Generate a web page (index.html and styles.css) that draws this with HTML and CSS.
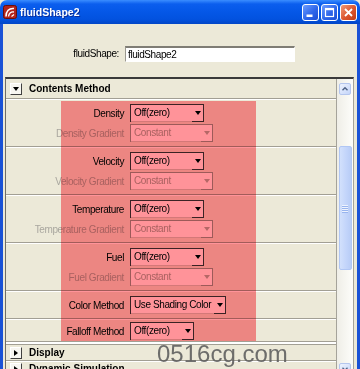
FILE: index.html
```html
<!DOCTYPE html>
<html lang="en">
<head>
    <meta charset="UTF-8">
    <meta name="viewport" content="width=device-width, initial-scale=1.0">
    <title>fluidShape2</title>
    <link rel="stylesheet" href="styles.css">
</head>
<body>
    <div class="window">
        <div class="titlebar">
            <svg class="app-icon" viewBox="0 0 14 14">
                <rect x="0.5" y="0.5" width="13" height="13" rx="2" fill="#b3241c" stroke="#6a0f0a"/>
                <path d="M3 11.5 C3 6 6 3 11 3.5" fill="none" stroke="#fff" stroke-width="1.6"/>
                <path d="M5.5 11.5 C6 8 8 6.5 11 7" fill="none" stroke="#fff" stroke-width="1.4"/>
                <path d="M8.5 11.5 L11 9.5" fill="none" stroke="#fff" stroke-width="1.3"/>
            </svg>
            <span class="title">fluidShape2</span>
            <div class="caption-buttons">
                <span class="cap-btn">
                    <svg viewBox="0 0 15 15"><rect x="3.5" y="9.5" width="6" height="2.5" fill="#fff"/></svg>
                </span>
                <span class="cap-btn">
                    <svg viewBox="0 0 15 15"><rect x="3.5" y="3.5" width="8" height="8" fill="none" stroke="#fff" stroke-width="1.2"/><rect x="3" y="3" width="9" height="2.2" fill="#fff"/></svg>
                </span>
                <span class="cap-btn close">
                    <svg viewBox="0 0 15 15"><path d="M4 4 L11 11 M11 4 L4 11" stroke="#fff" stroke-width="1.8"/></svg>
                </span>
            </div>
        </div>

        <div class="client">
            <div class="name-row">
                <span class="name-label">fluidShape:</span>
                <div class="text-field">fluidShape2</div>
            </div>

            <div class="panel">
                <div class="scroll-area">
                    <div class="frame-header">
                        <span class="toggle"><i class="tri-down"></i></span>
                        <span>Contents Method</span>
                    </div>

                    <div class="section">
                        <div class="row">
                            <span class="label">Density</span>
                            <div class="dropdown w-off"><span class="value">Off(zero)</span><span class="btn"></span></div>
                        </div>
                        <div class="row disabled">
                            <span class="label">Density Gradient</span>
                            <div class="dropdown w-const"><span class="value">Constant</span><span class="btn"></span></div>
                        </div>
                    </div>

                    <div class="section">
                        <div class="row">
                            <span class="label">Velocity</span>
                            <div class="dropdown w-off"><span class="value">Off(zero)</span><span class="btn"></span></div>
                        </div>
                        <div class="row disabled">
                            <span class="label">Velocity Gradient</span>
                            <div class="dropdown w-const"><span class="value">Constant</span><span class="btn"></span></div>
                        </div>
                    </div>

                    <div class="section">
                        <div class="row">
                            <span class="label">Temperature</span>
                            <div class="dropdown w-off"><span class="value">Off(zero)</span><span class="btn"></span></div>
                        </div>
                        <div class="row disabled">
                            <span class="label">Temperature Gradient</span>
                            <div class="dropdown w-const"><span class="value">Constant</span><span class="btn"></span></div>
                        </div>
                    </div>

                    <div class="section">
                        <div class="row">
                            <span class="label">Fuel</span>
                            <div class="dropdown w-off"><span class="value">Off(zero)</span><span class="btn"></span></div>
                        </div>
                        <div class="row disabled">
                            <span class="label">Fuel Gradient</span>
                            <div class="dropdown w-const"><span class="value">Constant</span><span class="btn"></span></div>
                        </div>
                    </div>

                    <div class="section">
                        <div class="row">
                            <span class="label">Color Method</span>
                            <div class="dropdown w-color"><span class="value">Use Shading Color</span><span class="btn"></span></div>
                        </div>
                    </div>

                    <div class="section last">
                        <div class="row">
                            <span class="label">Falloff Method</span>
                            <div class="dropdown w-falloff"><span class="value">Off(zero)</span><span class="btn"></span></div>
                        </div>
                    </div>

                    <div class="frame-end"></div>

                    <div class="frame-header small">
                        <span class="toggle"><i class="tri-right"></i></span>
                        <span>Display</span>
                    </div>
                    <div class="frame-header small">
                        <span class="toggle"><i class="tri-right"></i></span>
                        <span>Dynamic Simulation</span>
                    </div>
                </div>

                <div class="scrollbar">
                    <span class="sb-btn up">
                        <svg viewBox="0 0 12 12"><path d="M3 7.5 L6 4.5 L9 7.5" fill="none" stroke="#4d6185" stroke-width="1.6"/></svg>
                    </span>
                    <span class="sb-thumb"><i></i><i></i><i></i><i></i></span>
                    <span class="sb-btn down">
                        <svg viewBox="0 0 12 12"><path d="M3 4.5 L6 7.5 L9 4.5" fill="none" stroke="#4d6185" stroke-width="1.6"/></svg>
                    </span>
                </div>
            </div>
        </div>

        <div class="highlight"></div>
        <div class="watermark">0516cg.com</div>
    </div>
</body>
</html>
```

FILE: styles.css
```css
*{
    margin: 0;
    padding: 0;
    box-sizing: border-box;
}
body{
    width: 360px;
    height: 369px;
    overflow: hidden;
    background: #ece9d8;
    font-family: "Liberation Sans", Arial, sans-serif;
    font-size: 10px;
    letter-spacing: -0.4px;
    color: #000;
}
.window{
    position: relative;
    width: 360px;
    height: 369px;
    display: flex;
    flex-direction: column;
    background: #ece9d8;
    overflow: hidden;
}

/* title bar */
.titlebar{
    height: 24px;
    flex: none;
    display: flex;
    align-items: center;
    padding: 0 3px 0 3px;
    border-radius: 7px 7px 0 0;
    background: linear-gradient(#3a8dff, #0b5eee 4px, #0558e8 45%, #0252df 80%, #0246c6);
}
.app-icon{
    width: 14px;
    height: 14px;
    margin-right: 3px;
}
.title{
    flex: 1;
    font-weight: bold;
    font-size: 10.5px;
    letter-spacing: 0;
    color: #fff;
    text-shadow: 1px 1px 0 #0b2d99;
}
.caption-buttons{
    display: flex;
    gap: 2px;
}
.cap-btn{
    width: 17px;
    height: 17px;
    border: 1px solid #fff;
    border-radius: 3px;
    background: linear-gradient(135deg, #6d9dff, #2e66ea 55%, #1c4fd5);
    display: flex;
    align-items: center;
    justify-content: center;
}
.cap-btn svg{
    width: 15px;
    height: 15px;
}
.cap-btn.close{
    background: linear-gradient(135deg, #f09a78, #dc552e 55%, #c23c17);
}

/* window body */
.client{
    flex: 1;
    min-height: 0;
    display: flex;
    flex-direction: column;
    border-left: 3px solid #1a52d6;
    border-right: 3px solid #1a52d6;
}
.name-row{
    height: 53px;
    flex: none;
    display: flex;
    align-items: flex-start;
    gap: 6px;
    padding-top: 22px;
}
.name-label{
    width: 116px;
    text-align: right;
    line-height: 16px;
}
.text-field{
    width: 170px;
    height: 16px;
    background: #fff;
    border-top: 2px solid #7f7d75;
    border-left: 1px solid #9a988f;
    border-right: 1px solid #fff;
    border-bottom: 1px solid #fff;
    padding-left: 2px;
    line-height: 13px;
}

.panel{
    flex: 1;
    min-height: 0;
    display: flex;
    margin: 0 3px 0 2px;
    border-top: 2px solid #3a3a3a;
    border-left: 1px solid #6f6e68;
    border-right: 1px solid #a5a39a;
    overflow: hidden;
}
.scroll-area{
    width: 330px;
    flex: none;
}

/* collapsible frames */
.frame-header{
    height: 20px;
    display: flex;
    align-items: center;
    gap: 7px;
    padding-left: 4px;
    font-weight: bold;
    font-size: 10px;
    letter-spacing: 0;
    border-bottom: 1px solid #a29f94;
    box-shadow: 0 1px 0 #fff;
}
.frame-header.small{
    height: 16px;
}
.toggle{
    width: 12px;
    height: 12px;
    background: #f7f6f1;
    border: 1px solid;
    border-color: #fff #404040 #404040 #fff;
    display: flex;
    align-items: center;
    justify-content: center;
}
.tri-down{
    border-left: 3px solid transparent;
    border-right: 3px solid transparent;
    border-top: 4px solid #000;
}
.tri-right{
    border-top: 3px solid transparent;
    border-bottom: 3px solid transparent;
    border-left: 4px solid #000;
}
.section{
    display: flex;
    flex-direction: column;
    padding: 4px 0 3px;
    border-bottom: 1px solid #a29f94;
    box-shadow: 0 1px 0 #fff;
}
.section.last{
    padding: 2px 0 0;
    border-bottom: none;
    box-shadow: none;
}
.frame-end{
    height: 4px;
    border-top: 1px solid #a29f94;
    border-bottom: 1px solid #a29f94;
    background: #fff;
}

/* attribute rows */
.row{
    height: 20px;
    display: flex;
    align-items: center;
    gap: 6px;
}
.label{
    width: 118px;
    text-align: right;
    white-space: nowrap;
}
.row.disabled .label{
    color: #a9a79f;
}
.dropdown{
    height: 18px;
    display: flex;
    background: #fff;
    border-top: 1px solid #3b3b3b;
    border-left: 1px solid #3b3b3b;
}
.dropdown .value{
    flex: 1;
    padding-left: 3px;
    line-height: 16px;
    white-space: nowrap;
    overflow: hidden;
    border-bottom: 1px solid #d4d0c8;
}
.dropdown .btn{
    width: 12px;
    flex: none;
    display: flex;
    align-items: center;
    justify-content: center;
    border-right: 1px solid #3b3b3b;
    border-bottom: 1px solid #3b3b3b;
}
.dropdown .btn::after{
    content: "";
    border-left: 3px solid transparent;
    border-right: 3px solid transparent;
    border-top: 4px solid #000;
}
.row.disabled .dropdown{
    border-color: #9d9b94;
}
.row.disabled .value{
    color: #aaa8a0;
}
.row.disabled .btn{
    border-color: #9d9b94;
}
.row.disabled .btn::after{
    border-top-color: #b5b3aa;
}
.w-off{ width: 74px; }
.w-const{ width: 83px; }
.w-color{ width: 96px; }
.w-falloff{ width: 64px; }

/* scrollbar */
.scrollbar{
    width: 17px;
    flex: none;
    display: flex;
    flex-direction: column;
    align-items: center;
    border-left: 1px solid #a5a39a;
    background: linear-gradient(to right, #efeee7, #fdfdfa);
}
.sb-btn{
    width: 12px;
    height: 12px;
    flex: none;
    border: 1px solid #b4c6ee;
    border-radius: 2px;
    background: linear-gradient(135deg, #eef3fe, #c4d5f9);
}
.sb-btn svg{
    display: block;
    width: 10px;
    height: 10px;
}
.sb-btn.up{
    margin-top: 4px;
}
.sb-btn.down{
    margin-top: 93px;
}
.sb-thumb{
    width: 13px;
    height: 124px;
    flex: none;
    margin-top: 51px;
    border: 1px solid #b0c6f4;
    border-radius: 2px;
    background: linear-gradient(to right, #d2e0fc, #c2d4fa 60%, #b8ccf6);
    display: flex;
    flex-direction: column;
    align-items: center;
    justify-content: center;
    gap: 1px;
}
.sb-thumb i{
    width: 6px;
    height: 1px;
    background: #eef3fe;
    box-shadow: 0 1px 0 #98b4ee;
}

/* overlays */
.highlight{
    position: absolute;
    left: 61px;
    top: 101px;
    width: 195px;
    height: 240px;
    background: #ff9399;
    mix-blend-mode: multiply;
}
.watermark{
    position: absolute;
    left: 157px;
    top: 342px;
    font-size: 24px;
    line-height: 24px;
    letter-spacing: 0;
    color: rgba(95, 95, 95, 0.9);
}
```
